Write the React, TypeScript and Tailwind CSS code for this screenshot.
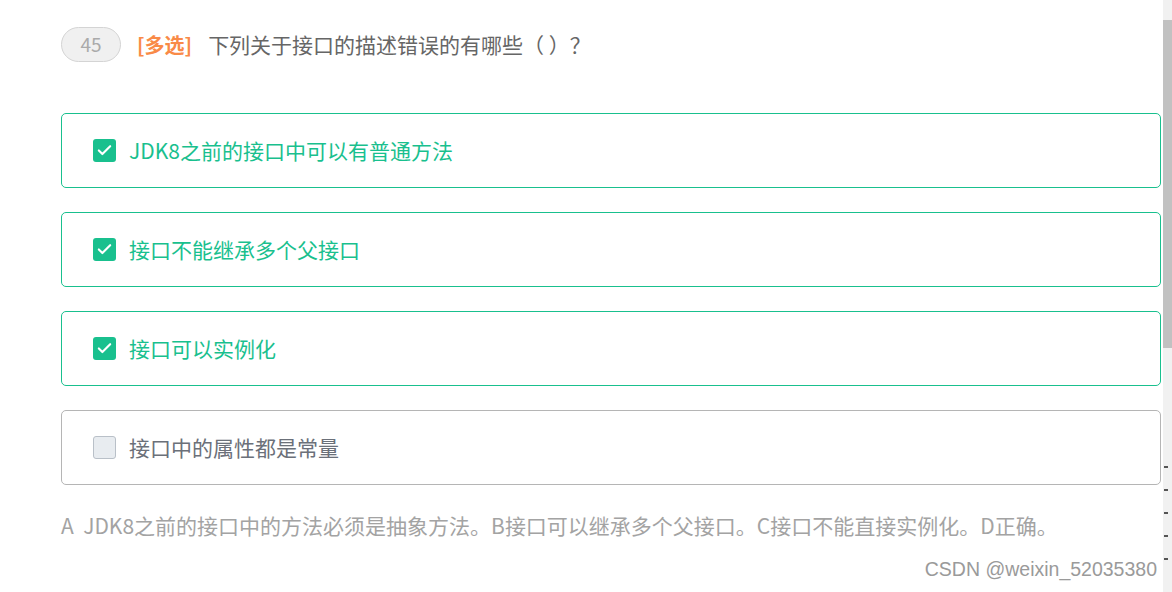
import { Check } from "lucide-react"

const options = [
  { text: "JDK8之前的接口中可以有普通方法", checked: true },
  { text: "接口不能继承多个父接口", checked: true },
  { text: "接口可以实例化", checked: true },
  { text: "接口中的属性都是常量", checked: false },
]

const font = "font-['Microsoft_YaHei','Noto_Sans_CJK_SC',sans-serif]"

export default function App() {
  return (
    <div className={`relative flex h-[592px] w-[1172px] overflow-hidden bg-white ${font}`}>
      <div className="flex-1 pl-[61px] pr-[2px] pt-[27px]">
        {/* question header */}
        <div className="flex items-center">
          <span className="flex h-[35px] w-[60px] items-center justify-center rounded-full border border-[#d4d4d4] bg-[#f0f0f0] text-[19px] text-[#aaaaaa]">
            45
          </span>
          <span className="ml-[16px] text-[20px] font-bold text-[#f98a47]">[多选]</span>
          <span className="ml-[16px] text-[21px] text-[#666666]">下列关于接口的描述错误的有哪些（ ）？</span>
        </div>

        <div className="mt-[51px] space-y-[24px]">
          {options.map((o) => (
            <div
              key={o.text}
              className={
                o.checked
                  ? "flex h-[75px] items-center rounded-[5px] border border-[#19c08e] pl-[31px]"
                  : "flex h-[75px] items-center rounded-[5px] border border-[#b5b5b5] pl-[31px]"
              }
            >
              {o.checked ? (
                <span className="flex h-[23px] w-[23px] items-center justify-center rounded-[3px] bg-[#19c08e]">
                  <Check className="h-[17px] w-[17px] text-white" strokeWidth={3} />
                </span>
              ) : (
                <span className="h-[23px] w-[23px] rounded-[3px] border border-[#b9c0c8] bg-[#e8ecf0]" />
              )}
              <span
                className={
                  o.checked
                    ? "ml-[13px] text-[21px] text-[#19c08e]"
                    : "ml-[13px] text-[21px] text-[#6b7079]"
                }
              >
                {o.text}
              </span>
            </div>
          ))}
        </div>

        <p className="mt-[25px] whitespace-pre text-[21px] text-[#a3a3a3]">
          A  JDK8之前的接口中的方法必须是抽象方法。B接口可以继承多个父接口。C接口不能直接实例化。D正确。
        </p>
      </div>

      {/* scrollbar */}
      <div className="flex w-[9px] flex-col bg-[#f1f1f1] pt-[20px]">
        <div className="h-[328px] w-full bg-[#c1c1c1]" />
        <div className="mt-[118px] flex flex-col gap-[21px] pl-[1px]">
          <span className="h-[2px] w-[4px] bg-[#555]" />
          <span className="h-[2px] w-[4px] bg-[#555]" />
          <span className="h-[2px] w-[4px] bg-[#555]" />
          <span className="h-[2px] w-[4px] bg-[#555]" />
          <span className="h-[2px] w-[4px] bg-[#555]" />
        </div>
      </div>

      <span className="absolute bottom-[8px] right-[15px] font-['Liberation_Sans',Arial,sans-serif] text-[19.5px] text-[#9a9a9a]">
        CSDN @weixin_52035380
      </span>
    </div>
  )
}
